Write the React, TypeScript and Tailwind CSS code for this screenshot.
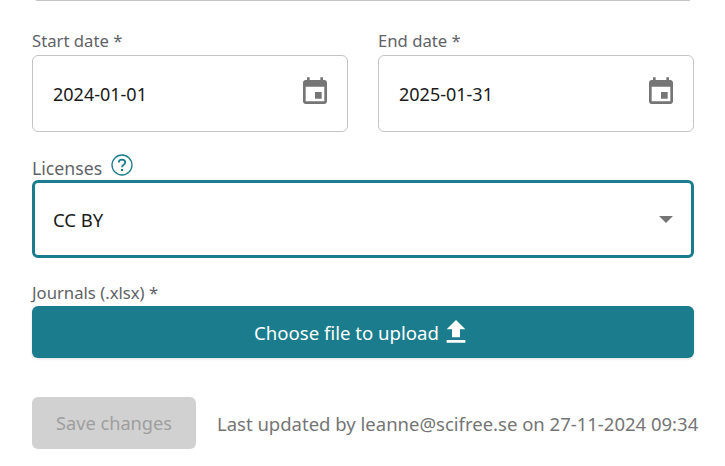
import React from "react"

const FONT = "font-['Noto_Sans','Open_Sans',sans-serif]"

function CalendarIcon() {
  return (
    <svg viewBox="0 0 24 24" className="w-8 h-8 fill-[#757575] shrink-0 mb-[4px]">
      <path d="M17 12h-5v5h5v-5zM16 1v2H8V1H6v2H5c-1.11 0-1.99.9-1.99 2L3 19c0 1.1.89 2 2 2h14c1.1 0 2-.9 2-2V5c0-1.1-.9-2-2-2h-1V1h-2zm3 18H5V8h14v11z" />
    </svg>
  )
}

function HelpIcon() {
  return (
    <svg viewBox="0 0 22 22" className="w-[22px] h-[22px] text-[#1a7c8c] mb-[4px]" fill="none" stroke="currentColor">
      <circle cx="11" cy="11" r="10" strokeWidth="1.3" />
      <path d="M7.8 8.6c0-1.9 1.4-3 3.2-3s3.2 1.1 3.2 2.8c0 2.4-3.2 2.4-3.2 4.8" strokeWidth="1.8" />
      <path d="M10 15h2v2h-2z" fill="currentColor" stroke="none" />
    </svg>
  )
}

function DateField({ label, value }: { label: string; value: string }) {
  return (
    <div className="flex-1 min-w-0">
      <div className="text-[16.7px] leading-[22px] text-[#5f6368] mb-[3px] pt-px -mt-px">{label}</div>
      <div className="h-[77px] flex items-center justify-between border border-[#c4c4c4] rounded-[6px] pl-[20px] pr-[16px] bg-white">
        <span className="text-[18px] text-[#1a1a1a] pt-[2px]">{value}</span>
        <CalendarIcon />
      </div>
    </div>
  )
}

export default function App() {
  return (
    <div className={`${FONT} w-[725px] h-[466px] bg-white overflow-hidden pl-[32px] pr-[31px]`}>
      <div className="h-px mx-[4px] bg-[#c4c4c4] mb-[29px]" />

      <div className="flex gap-[30px]">
        <DateField label="Start date *" value="2024-01-01" />
        <DateField label="End date *" value="2025-01-31" />
      </div>

      <div className="mt-[22px] flex items-center gap-[9px] h-[26px]">
        <span className="text-[17.7px] leading-[22px] text-[#5f6368] mt-[2px]">Licenses</span>
        <HelpIcon />
      </div>
      <div className="h-[78px] flex items-center justify-between border-[3px] border-[#1a7c8c] rounded-[6px] pl-[18px] pr-[18px] bg-white">
        <span className="text-[18.5px] text-[#1a1a1a] pt-[2px]">CC BY</span>
        <span className="w-0 h-0 border-x-[7px] border-x-transparent border-t-[7px] border-t-[#757575]" />
      </div>

      <div className="mt-[24px] text-[16.7px] leading-[22px] text-[#5f6368]">Journals (.xlsx) *</div>
      <button
        type="button"
        className="mt-[2px] w-full h-[52px] flex items-center justify-center gap-[1px] bg-[#1a7c8c] rounded-[6px] text-white text-[18.6px] shadow-sm"
      >
        <span className="pt-[2px]">Choose file to upload</span>
        <svg viewBox="0 0 24 24" className="w-8 h-8 fill-white">
          <path d="M9 16h6v-6h4l-7-7-7 7h4zm-4 2h14v2H5z" />
        </svg>
      </button>

      <div className="mt-[39px] flex items-center gap-[21px] whitespace-nowrap">
        <button type="button" disabled className="shrink-0 w-[164px] h-[52px] pt-[2px] bg-[#d1d1d1] rounded-[6px] text-[18.2px] text-[#9e9e9e]">
          Save changes
        </button>
        <span className="shrink-0 text-[18.5px] text-[#757575] pt-[2px]">Last updated by leanne@scifree.se on 27-11-2024 09:34</span>
      </div>
    </div>
  )
}
